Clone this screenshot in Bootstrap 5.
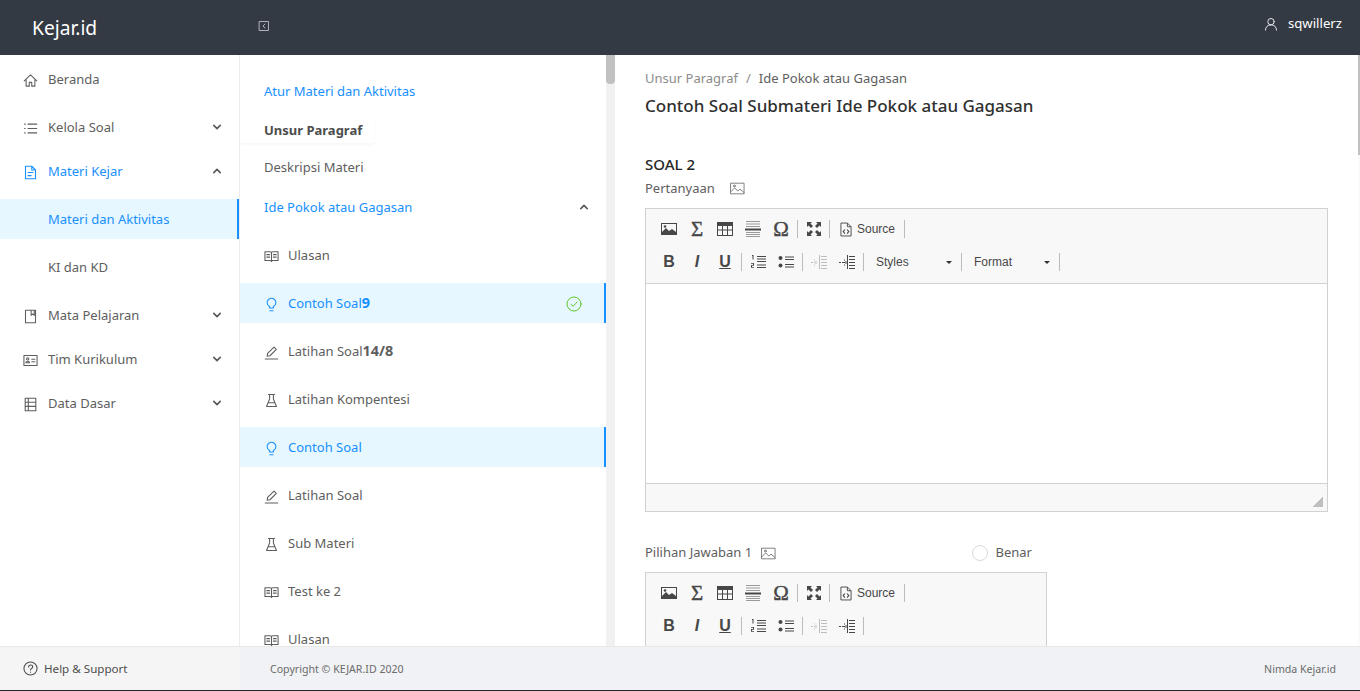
<!DOCTYPE html>
<html lang="en">
<head>
  <meta charset="UTF-8" />
  <title>Kejar.id</title>
  <meta name="viewport" content="width=device-width, initial-scale=1" />
  <link href="https://cdn.jsdelivr.net/npm/bootstrap@5.3.0/dist/css/bootstrap.min.css" rel="stylesheet" />
  <style>
    html, body { height: 100%; overflow: hidden; }
    body {
      font-family: "Noto Sans", sans-serif;
      font-size: 13px;
      color: #5e5e5e;
      background: #22262c;
    }
    .ic { fill: none; stroke: currentColor; stroke-width: 1.7; stroke-linecap: round; stroke-linejoin: round; flex: none; }

    .app-shell { height: 690px; display: flex; flex-direction: column; }

    .top-bar { height: 55px; background: #343a43; color: #fff; flex: none; }
    .brand-box { width: 240px; padding-left: 32px; font-size: 19.2px; line-height: 53px; }
    .collapse-btn { margin: 0 0 3px 18px; color: #c4c7cc; }
    .user-box { padding: 0 18px 7px 0; font-size: 13.2px; }
    .user-box .ic { margin-right: 10px; color: #e4e5e7; }

    .work-area { flex: 1 1 auto; min-height: 0; display: flex; overflow: hidden; background: #fff; }

    .side-menu { width: 240px; flex: none; padding-top: 4px; border-right: 1px solid #ececec; background: #fff; }
    .menu-row { height: 40px; padding-top: 2px; display: flex; align-items: center; color: #5e5e5e; position: relative; }
    .menu-row .ic { width: 15px; height: 15px; }
    .menu-row b { font-size: 14.4px; line-height: 1; }
    .side-menu .menu-row { padding-left: 23px; padding-right: 18px; }
    .side-menu .menu-row .label-txt { margin-left: 10px; }
    .side-menu .menu-row.sub-row { padding-left: 48px; }
    .menu-row.on-blue { color: #1890ff; }
    .menu-row.picked { color: #1890ff; background: #e6f7ff; }
    .menu-row.picked::after { content: ""; position: absolute; top: 0; right: 0; bottom: 0; width: 2px; background: #1890ff; }
    .chev { width: 8px; height: 6px; margin-top: -2px; fill: none; stroke: #595959; stroke-width: 2; stroke-linecap: round; stroke-linejoin: round; }

    .tree-panel { width: 375px; flex: none; display: flex; background: #fff; }
    .tree-list { width: 366px; flex: none; overflow: hidden; padding-top: 16px; }
    .tree-list .menu-row { padding-left: 24px; padding-right: 18px; }
    .tree-list .menu-row .label-txt { margin-left: 9px; }
    .tree-list .menu-row .ic { width: 15px; height: 15px; }
    .unit-head { width: 135px; height: 29px; margin-top: 3px; padding: 6px 0 0 24px; font-weight: 700; color: #4d4d4d; border-radius: 0 0 4px 4px; box-shadow: 0 2px 3px rgba(0,0,0,.035); line-height: 20px; }
    .tree-list .menu-row .done-mark { color: #52c41a; width: 16px; height: 16px; stroke-width: 1.4; margin-left: auto; margin-right: 6px; }
    .scroll-track { width: 9px; flex: none; background: #f1f1f1; }
    .scroll-thumb { height: 29px; background: #c1c1c1; border-radius: 0 0 4px 4px; }

    .content-pane { flex: 1 1 auto; min-width: 0; display: flex; background: #fff; }
    .content-body { flex: 1 1 auto; min-width: 0; overflow: hidden; padding: 13px 30px 0 30px; }
    .pane-track { width: 2px; flex: none; background: #fafafa; }
    .pane-thumb { height: 100px; background: #c1c1c1; }

    .crumb-line { line-height: 20px; }
    .crumb-line .dim { color: #8c8c8c; }
    .crumb-line .slash { color: #8c8c8c; margin: 0 8px; }
    .page-title { font-size: 17px; font-weight: 500; color: #303030; line-height: 24px; margin: 6px 0 0; }
    .soal-title { font-size: 15px; font-weight: 500; color: #262626; line-height: 20px; margin: 36px 0 0; }
    .field-label { line-height: 20px; display: flex; align-items: center; }
    .pic-ic { width: 15px; height: 15px; stroke-width: 1.3; color: #666; margin-left: 15px; }

    .cke-box { border: 1px solid #d1d1d1; background: #f8f8f8; margin-top: 10px; }
    .cke-short { width: 402px; margin-top: 9px; }
    .cke-bar { padding: 6px 8px 7px 9px; font-family: "Liberation Sans", sans-serif; font-size: 12px; color: #333; border-bottom: 1px solid #d1d1d1; }
    .cke-row { display: flex; align-items: center; height: 28px; }
    .cke-row + .cke-row { margin-top: 5px; }
    .cke-btn { width: 28px; height: 28px; display: flex; align-items: center; justify-content: center; color: #474747; }
    .cke-btn.faded { color: #bdbdbd; }
    .cke-btn.tight { width: 27px; }
    .cke-btn svg { width: 16px; height: 16px; }
    .cke-glyph { font-family: "Liberation Serif", serif; font-size: 21px; line-height: 1; -webkit-text-stroke: .4px currentColor; }
    .cke-letter { font-family: "Liberation Sans", sans-serif; font-size: 16px; font-weight: 700; line-height: 1; }
    .cke-sep { width: 1px; height: 18px; background: #bcbcbc; margin: 0 2px; }
    .cke-src { display: flex; align-items: center; padding: 0 7px 0 8px; height: 28px; color: #474747; }
    .cke-src svg { width: 12px; height: 15px; margin-right: 5px; }
    .cke-drop { display: flex; align-items: center; justify-content: space-between; width: 93px; height: 28px; padding: 0 7px 0 10px; color: #484848; }
    .cke-caret { width: 0; height: 0; border-left: 3px solid transparent; border-right: 3px solid transparent; border-top: 3px solid #333; }
    .cke-write { height: 200px; background: #fff; border-bottom: 1px solid #d1d1d1; }
    .cke-foot { height: 27px; display: flex; align-items: flex-end; justify-content: flex-end; padding: 0 4px 4px 0; }
    .cke-grip { width: 10px; height: 10px; background: linear-gradient(135deg, transparent 50%, #bfbfbf 50%); }

    .answer-head { width: 402px; margin-top: 31px; height: 20px; display: flex; align-items: center; white-space: nowrap; }
    .answer-head .pic-ic { margin-left: 9px; }
    .radio-dot { width: 16px; height: 16px; border: 1px solid #d9d9d9; border-radius: 50%; background: #fff; margin-right: 8px; }
    .answer-right { margin-right: 15px; }

    .bottom-bar { height: 44px; flex: none; display: flex; border-top: 1px solid #e8e8e8; }
    .help-box { width: 240px; background: #f5f5f5; padding-left: 23px; color: #4d4d4d; font-size: 11.6px; }
    .help-box .ic { width: 15px; height: 15px; margin-right: 6px; }
    .copy-box { flex: 1 1 auto; background: #f0f2f5; padding: 2px 24px 0 30px; font-size: 10.6px; color: #6b6b6b; }
  </style>
</head>
<body>

  <svg class="d-none" xmlns="http://www.w3.org/2000/svg">
    <symbol id="i-home" viewBox="0 0 24 24"><path d="M2 12.500 12 3l10 9.500M5 10v11h5v-6h4v6h5V10"/></symbol>
    <symbol id="i-list" viewBox="0 0 24 24"><path d="M8 5h14M8 12h14M8 19h14M2.500 5h1M2.500 12h1M2.500 19h1"/></symbol>
    <symbol id="i-file" viewBox="0 0 24 24"><path d="M14 2H4v20h16V8zM14 2v6h6M8 12h8M8 17h5"/></symbol>
    <symbol id="i-book" viewBox="0 0 24 24"><path d="M4 2h16v20H4zM13 2v8l2.500-2 2.500 2V2"/></symbol>
    <symbol id="i-card" viewBox="0 0 24 24"><path d="M1.500 4h21v16h-21zM4.500 15.500c.5-3 5.500-3 6 0zM14 10h5M14 14h5"/><circle cx="7.500" cy="9.500" r="1.800"/></symbol>
    <symbol id="i-data" viewBox="0 0 24 24"><path d="M3.500 2h17v20h-17zM3.500 8.500h17M3.500 15h17M8.500 2v20"/></symbol>
    <symbol id="i-read" viewBox="0 0 24 24"><path d="M1.500 4.500h8.500c1 0 2 .7 2 2 0-1.300 1-2 2-2h8.500v14H14c-1 0-2 .5-2 1.500 0-1-1-1.500-2-1.500H1.500zM12 6.500V20M4.500 9h4.500M4.500 13h4.500M15 9h4.500M15 13h4.500"/></symbol>
    <symbol id="i-bulb" viewBox="0 0 24 24"><path d="M9 17.500h6v-2.300c2.500-1.400 4-3.700 4-6.200a7 7 0 0 0-14 0c0 2.500 1.500 4.800 4 6.200zM9.500 22h5"/></symbol>
    <symbol id="i-edit" viewBox="0 0 24 24"><path d="M2 22.500h20M5 18l.8-4.500L16 3.300l3.700 3.700L9.500 17.200z"/></symbol>
    <symbol id="i-flask" viewBox="0 0 24 24"><path d="M7 2.500h10M9 2.500v7L4 21.500h16L15 9.500v-7M6.500 15.500h11"/></symbol>
    <symbol id="i-check" viewBox="0 0 24 24"><circle cx="12" cy="12" r="10.500"/><path d="m7.500 12.500 3.200 3 6-6.500"/></symbol>
    <symbol id="i-help" viewBox="0 0 24 24"><circle cx="12" cy="12" r="10.500"/><path d="M9 9.500c0-4 6.500-4 6.500 0 0 2.500-3.500 2.500-3.500 5M12 17.500v.5"/></symbol>
    <symbol id="i-user" viewBox="0 0 24 24"><circle cx="12" cy="8" r="5.500"/><path d="M2.500 22.500c0-5.500 4-9 9.500-9s9.500 3.500 9.500 9"/></symbol>
    <symbol id="i-pic" viewBox="0 0 24 24"><path d="M1.500 3.500h21v17h-21zM1.500 17l6-6 5 5 3.500-3 6.500 5.500"/><circle cx="7" cy="8" r="1.500"/></symbol>
    <symbol id="i-back" viewBox="0 0 24 24"><path d="M3 3h18v18H3zM14 8l-4 4 4 4"/></symbol>
    <!-- editor toolbar -->
    <symbol id="c-image" viewBox="0 0 16 16"><path fill="currentColor" d="M0 2h16v12H0zm1 1v10h14V3z"/><path fill="currentColor" d="M1 13v-2l4-4 3 3 3-2 4 3v2z"/><circle fill="currentColor" cx="4" cy="5.500" r="1.300"/></symbol>
    <symbol id="c-table" viewBox="0 0 16 16"><path fill="currentColor" d="M0 1h16v14H0zm1 4v9h4V9.500H1v-1h4V5zm5 0v3.500h4V5zm5 0v3.500h4V5zM6 9.500V14h4V9.500zm5 0V14h4V9.500z"/></symbol>
    <symbol id="c-hr" viewBox="0 0 16 16"><path fill="#9a9a9a" d="M1 0h14v1H1zM1 2.500h14v1H1zM1 5h14v1H1zM1 11h14v1H1zM1 13h14v1H1zM1 15h14v1H1z"/><path fill="currentColor" d="M0 7.500h16v2H0z"/></symbol>
    <symbol id="c-max" viewBox="0 0 16 16"><path fill="currentColor" d="M1 1h5L4.500 2.500 7 5 5 7 2.500 4.500 1 6zM15 1v5l-1.500-1.500L11 7 9 5l2.500-2.500L10 1zM1 15v-5l1.500 1.500L5 9l2 2-2.500 2.500L6 15zM15 15h-5l1.500-1.500L9 11l2-2 2.500 2.500L15 10z"/></symbol>
    <symbol id="c-src" viewBox="0 0 13 15"><path fill="none" stroke="currentColor" d="M1 .5h7l4 4v10H1zM8 .5v4h4"/><path fill="none" stroke="currentColor" stroke-width="1.200" d="M5.300 7.500 3.500 9.700l1.800 2.200M7.700 7.500l1.800 2.200-1.800 2.200"/></symbol>
    <symbol id="c-ol" viewBox="0 0 16 16"><path fill="currentColor" d="M7 2h9v1H7zM7 4.500h9v1H7zM7 7h9v1H7zM7 10.500h9v1H7zM7 13h9v1H7zM2 1h1.500v4.500h-1V2H2zM1 9h3v2.700H2V13h2v.8H1v-2.700h2V9.800H1z"/></symbol>
    <symbol id="c-ul" viewBox="0 0 16 16"><circle fill="currentColor" cx="2.500" cy="4" r="2"/><circle fill="currentColor" cx="2.500" cy="11.500" r="2"/><path fill="currentColor" d="M7 2.500h9v1H7zM7 5h9v1H7zM7 10h9v1H7zM7 12.500h9v1H7z"/></symbol>
    <symbol id="c-out" viewBox="0 0 16 16"><path fill="currentColor" d="M8 1h1v14H8zM10 2h6v1h-6zM10 5h6v1h-6zM10 8h6v1h-6zM10 11h6v1h-6zM10 14h6v1h-6zM0 8h2v1H0zM3 8h2v1H3zM3 5.500h1v1H3zM3 10.500h1v1H3zM4.500 7v3h1V7z"/></symbol>
    <symbol id="c-ind" viewBox="0 0 16 16"><path fill="currentColor" d="M8 1h1v14H8zM10 2h6v1h-6zM10 5h6v1h-6zM10 8h6v1h-6zM10 11h6v1h-6zM10 14h6v1h-6zM0 8h2v1H0zM3 8h3v1H3zM5 5.500h1v1H5zM5 10.500h1v1H5zM6.500 7v3h1V7z"/></symbol>
  </svg>

  <div class="app-shell">
    <header class="top-bar d-flex align-items-center">
      <div class="brand-box">Kejar.id</div>
      <svg class="ic collapse-btn" width="12" height="12" viewBox="0 0 24 24"><use href="#i-back"/></svg>
      <div class="user-box ms-auto d-flex align-items-center">
        <svg class="ic" width="14" height="14" viewBox="0 0 24 24"><use href="#i-user"/></svg>
        <span>sqwillerz</span>
      </div>
    </header>

    <div class="work-area">
      <nav class="side-menu">
        <div class="menu-row mb-2"><svg class="ic"><use href="#i-home"/></svg><span class="label-txt">Beranda</span></div>
        <div class="menu-row mb-1"><svg class="ic"><use href="#i-list"/></svg><span class="label-txt">Kelola Soal</span><svg class="chev ms-auto" viewBox="0 0 10 7"><path d="m1 1.500 4 4 4-4"/></svg></div>
        <div class="menu-row on-blue mb-2"><svg class="ic"><use href="#i-file"/></svg><span class="label-txt">Materi Kejar</span><svg class="chev ms-auto" viewBox="0 0 10 7"><path d="m1 5.500 4-4 4 4"/></svg></div>
        <div class="menu-row sub-row picked mb-2">Materi dan Aktivitas</div>
        <div class="menu-row sub-row mb-2">KI dan KD</div>
        <div class="menu-row mb-1"><svg class="ic"><use href="#i-book"/></svg><span class="label-txt">Mata Pelajaran</span><svg class="chev ms-auto" viewBox="0 0 10 7"><path d="m1 1.500 4 4 4-4"/></svg></div>
        <div class="menu-row mb-1"><svg class="ic"><use href="#i-card"/></svg><span class="label-txt">Tim Kurikulum</span><svg class="chev ms-auto" viewBox="0 0 10 7"><path d="m1 1.500 4 4 4-4"/></svg></div>
        <div class="menu-row"><svg class="ic"><use href="#i-data"/></svg><span class="label-txt">Data Dasar</span><svg class="chev ms-auto" viewBox="0 0 10 7"><path d="m1 1.500 4 4 4-4"/></svg></div>
      </nav>

      <div class="tree-panel">
        <div class="tree-list">
          <div class="menu-row on-blue">Atur Materi dan Aktivitas</div>
          <div class="unit-head">Unsur Paragraf</div>
          <div class="menu-row mt-1">Deskripsi Materi</div>
          <div class="menu-row on-blue mb-2">Ide Pokok atau Gagasan<svg class="chev ms-auto" viewBox="0 0 10 7"><path d="m1 5.500 4-4 4 4"/></svg></div>
          <div class="menu-row mb-2"><svg class="ic"><use href="#i-read"/></svg><span class="label-txt">Ulasan</span></div>
          <div class="menu-row picked mb-2"><svg class="ic"><use href="#i-bulb"/></svg><span class="label-txt">Contoh Soal<b>9</b></span><svg class="ic done-mark"><use href="#i-check"/></svg></div>
          <div class="menu-row mb-2"><svg class="ic"><use href="#i-edit"/></svg><span class="label-txt">Latihan Soal<b>14/8</b></span></div>
          <div class="menu-row mb-2"><svg class="ic"><use href="#i-flask"/></svg><span class="label-txt">Latihan Kompentesi</span></div>
          <div class="menu-row picked mb-2"><svg class="ic"><use href="#i-bulb"/></svg><span class="label-txt">Contoh Soal</span></div>
          <div class="menu-row mb-2"><svg class="ic"><use href="#i-edit"/></svg><span class="label-txt">Latihan Soal</span></div>
          <div class="menu-row mb-2"><svg class="ic"><use href="#i-flask"/></svg><span class="label-txt">Sub Materi</span></div>
          <div class="menu-row mb-2"><svg class="ic"><use href="#i-read"/></svg><span class="label-txt">Test ke 2</span></div>
          <div class="menu-row mb-2"><svg class="ic"><use href="#i-read"/></svg><span class="label-txt">Ulasan</span></div>
        </div>
        <div class="scroll-track"><div class="scroll-thumb"></div></div>
      </div>

      <main class="content-pane">
        <div class="content-body">
          <div class="crumb-line"><span class="dim">Unsur Paragraf</span><span class="slash">/</span>Ide Pokok atau Gagasan</div>
          <h1 class="page-title">Contoh Soal Submateri Ide Pokok atau Gagasan</h1>
          <h2 class="soal-title">SOAL 2</h2>
          <div class="field-label mt-1"><span>Pertanyaan</span><svg class="ic pic-ic"><use href="#i-pic"/></svg></div>

          <div class="cke-box">
            <div class="cke-bar">
              <div class="cke-row">
                <span class="cke-btn"><svg><use href="#c-image"/></svg></span>
                <span class="cke-btn"><span class="cke-glyph">Σ</span></span>
                <span class="cke-btn"><svg><use href="#c-table"/></svg></span>
                <span class="cke-btn"><svg><use href="#c-hr"/></svg></span>
                <span class="cke-btn"><span class="cke-glyph">Ω</span></span>
                <span class="cke-sep"></span>
                <span class="cke-btn tight"><svg><use href="#c-max"/></svg></span>
                <span class="cke-sep"></span>
                <span class="cke-src"><svg><use href="#c-src"/></svg>Source</span>
                <span class="cke-sep"></span>
              </div>
              <div class="cke-row">
                <span class="cke-btn"><span class="cke-letter">B</span></span>
                <span class="cke-btn"><span class="cke-letter fst-italic">I</span></span>
                <span class="cke-btn"><span class="cke-letter text-decoration-underline">U</span></span>
                <span class="cke-sep"></span>
                <span class="cke-btn"><svg><use href="#c-ol"/></svg></span>
                <span class="cke-btn"><svg><use href="#c-ul"/></svg></span>
                <span class="cke-sep"></span>
                <span class="cke-btn faded"><svg><use href="#c-out"/></svg></span>
                <span class="cke-btn"><svg><use href="#c-ind"/></svg></span>
                <span class="cke-sep"></span>
                <span class="cke-drop">Styles<span class="cke-caret"></span></span>
                <span class="cke-sep"></span>
                <span class="cke-drop">Format<span class="cke-caret"></span></span>
                <span class="cke-sep"></span>
              </div>
            </div>
            <div class="cke-write"></div>
            <div class="cke-foot"><span class="cke-grip"></span></div>
          </div>

          <div class="answer-head">
            <span>Pilihan Jawaban 1</span>
            <svg class="ic pic-ic"><use href="#i-pic"/></svg>
            <span class="radio-dot ms-auto"></span><span class="answer-right">Benar</span>
          </div>

          <div class="cke-box cke-short">
            <div class="cke-bar">
              <div class="cke-row">
                <span class="cke-btn"><svg><use href="#c-image"/></svg></span>
                <span class="cke-btn"><span class="cke-glyph">Σ</span></span>
                <span class="cke-btn"><svg><use href="#c-table"/></svg></span>
                <span class="cke-btn"><svg><use href="#c-hr"/></svg></span>
                <span class="cke-btn"><span class="cke-glyph">Ω</span></span>
                <span class="cke-sep"></span>
                <span class="cke-btn tight"><svg><use href="#c-max"/></svg></span>
                <span class="cke-sep"></span>
                <span class="cke-src"><svg><use href="#c-src"/></svg>Source</span>
                <span class="cke-sep"></span>
              </div>
              <div class="cke-row">
                <span class="cke-btn"><span class="cke-letter">B</span></span>
                <span class="cke-btn"><span class="cke-letter fst-italic">I</span></span>
                <span class="cke-btn"><span class="cke-letter text-decoration-underline">U</span></span>
                <span class="cke-sep"></span>
                <span class="cke-btn"><svg><use href="#c-ol"/></svg></span>
                <span class="cke-btn"><svg><use href="#c-ul"/></svg></span>
                <span class="cke-sep"></span>
                <span class="cke-btn faded"><svg><use href="#c-out"/></svg></span>
                <span class="cke-btn"><svg><use href="#c-ind"/></svg></span>
                <span class="cke-sep"></span>
              </div>
            </div>
          </div>
        </div>
        <div class="pane-track"><div class="pane-thumb"></div></div>
      </main>
    </div>

    <footer class="bottom-bar">
      <div class="help-box d-flex align-items-center">
        <svg class="ic"><use href="#i-help"/></svg>Help &amp; Support
      </div>
      <div class="copy-box d-flex align-items-center justify-content-between">
        <span>Copyright © KEJAR.ID 2020</span>
        <span>Nimda Kejar.id</span>
      </div>
    </footer>
  </div>

  <script src="https://cdn.jsdelivr.net/npm/bootstrap@5.3.0/dist/js/bootstrap.bundle.min.js"></script>
</body>
</html>
